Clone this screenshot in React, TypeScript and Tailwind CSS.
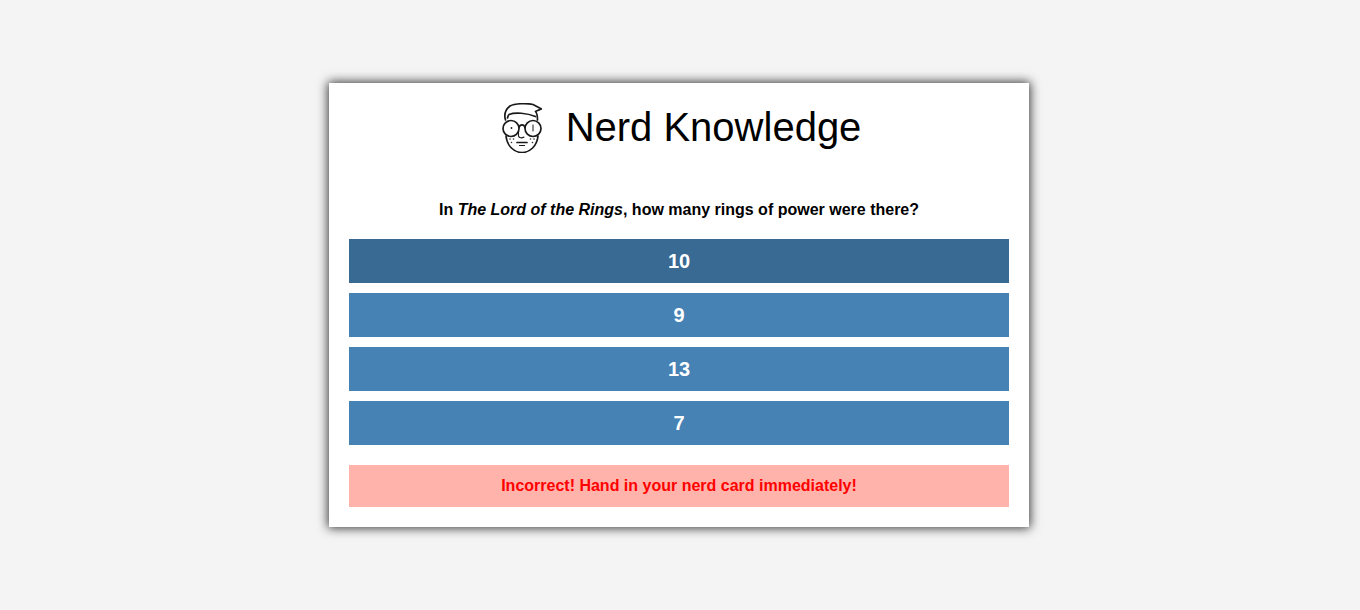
import React from 'react';

const answers = ['10', '9', '13', '7'];

const NerdIcon: React.FC = () => (
  <svg viewBox="0 0 40 50" className="w-10 h-[50px]" fill="none" stroke="#1a1a1a" strokeWidth="1.7" strokeLinecap="round" strokeLinejoin="round">
    {/* hair */}
    <path d="M3.5 17 C2 12 3 7 8 3 C13 0.5 24 0 31 1.5 L39.5 6 C37 7 35 7.5 33.5 8.5 C35 10 35.5 12 35.5 17" />
    <path d="M5.5 15 C6 12.5 6.5 12 7 11.5 C13 9 25 10 33.5 13.5" />
    {/* face */}
    <path d="M4 33 C5 43 12 49.5 20 49.5 C28 49.5 35 43 36 33" />
    {/* glasses */}
    <circle cx="9" cy="25.5" r="8" />
    <circle cx="31" cy="25.5" r="8" />
    <path d="M17 24.5 C18 21 22 21 23 24.5" />
    <circle cx="9.5" cy="25" r="0.9" fill="#1a1a1a" stroke="none" />
    <path d="M31 22 L31 28" strokeWidth="1" />
    {/* nose and mouth */}
    <path d="M16.5 28 L16.5 33 C17 35 20 35.5 22 34" strokeWidth="1.1" />
    <path d="M15 39.5 L25 39.5" />
    <path d="M17.5 42.5 L22.5 42.5" strokeWidth="1.1" />
    {/* freckles */}
    <g stroke="none" fill="#333">
      <circle cx="8" cy="36" r="0.8" />
      <circle cx="11.5" cy="36" r="0.8" />
      <circle cx="9.5" cy="39.5" r="0.8" />
      <circle cx="28.5" cy="36" r="0.8" />
      <circle cx="32" cy="36" r="0.8" />
      <circle cx="30.5" cy="39.5" r="0.8" />
    </g>
  </svg>
);

export default function App() {
  return (
    <div className="min-h-screen bg-[#f4f4f4] flex items-center justify-center pr-[2px] font-['Liberation_Sans',Arial,sans-serif] text-black">
      <div className="w-[700px] bg-white p-5 shadow-[0_0_10px_1px_rgba(0,0,0,0.8)]">
        <header className="flex items-center justify-center gap-[24px] pl-[5px] h-[50px]">
          <NerdIcon />
          <h1 className="text-[40px] leading-[44px] font-normal mb-[2px]">Nerd Knowledge</h1>
        </header>

        <p className="mt-[48px] mb-[20px] text-center text-base leading-[18px] font-bold">
          In <em>The Lord of the Rings</em>, how many rings of power were there?
        </p>

        <div className="flex flex-col gap-2.5">
          {answers.map((answer, i) => (
            <button
              key={answer}
              className={`h-11 w-full text-white text-xl font-bold ${i === 0 ? 'bg-[#396a93]' : 'bg-[#4682b4]'}`}
            >
              {answer}
            </button>
          ))}
        </div>

        <div className="mt-5 h-[42px] flex items-center justify-center bg-[#ffb3ab] text-[#f00] text-base font-bold">
          Incorrect! Hand in your nerd card immediately!
        </div>
      </div>
    </div>
  );
}
